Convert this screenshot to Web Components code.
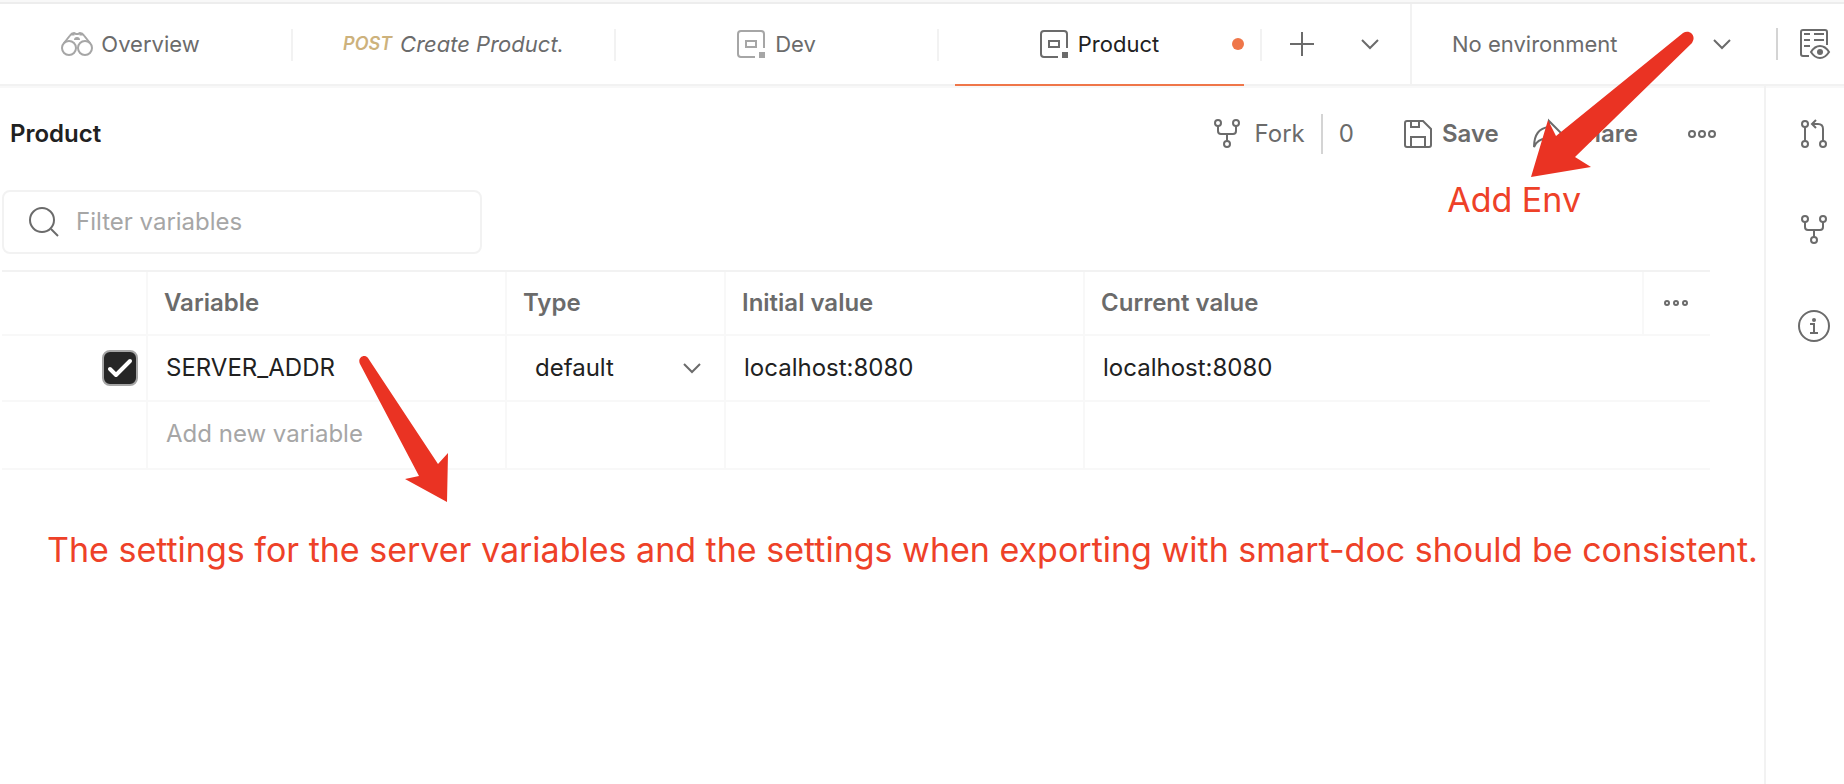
<!DOCTYPE html>
<html lang="en">
<head>
<meta charset="utf-8">
<meta name="viewport" content="width=device-width, initial-scale=1">
<title>Product environment</title>
<style>
  body { margin: 0; background: #fff; font-family: Inter, "Liberation Sans", sans-serif; font-size: 22px; line-height: 32px; color: #6b6b6b; }
</style>
</head>
<body>
<api-workspace></api-workspace>

<script>
const define = (name, html, setup) => {
  const template = document.createElement('template');
  template.innerHTML = html;
  customElements.define(name, class extends HTMLElement {
    constructor() {
      super();
      this.attachShadow({ mode: 'open' }).append(template.content.cloneNode(true));
    }
    connectedCallback() { if (setup) setup(this, this.shadowRoot); }
  });
};

const fork = '<circle cx="5" cy="4" r="3"/><circle cx="23" cy="4" r="3"/><circle cx="14" cy="25" r="3"/><path d="M5 7v5a3 3 0 0 0 3 3h12a3 3 0 0 0 3-3V7M14 15v7"/>';
const icons = {
  binoculars: [32, 24, '<circle cx="8" cy="16" r="7"/><circle cx="24" cy="16" r="7"/><path d="M3 11 9 3.500C10 2 11 1 13 1l2 1h2l2-1c2 0 3 1 4 2.500L29 11M10.500 2.500h3M18.500 2.500h3"/><path d="M13 8a3 3 0 0 1 6 0z" fill="currentColor" stroke="none"/>'],
  environment: [28, 28, '<path d="M18 27H4a3 3 0 0 1-3-3V4a3 3 0 0 1 3-3h20a3 3 0 0 1 3 3v14M9 11h10v6H9z"/><path d="M22 22h6v6h-6z" fill="currentColor" stroke="none"/>'],
  plus: [24, 24, '<path d="M12 0v24M0 12h24"/>'],
  chevron: [18, 10, '<path d="m1 1 8 8 8-8"/>'],
  preview: [30, 30, '<path d="M9 27H3a2 2 0 0 1-2-2V3a2 2 0 0 1 2-2h22a2 2 0 0 1 2 2v13M4 5h6M14 5h10M4 11h6M14 11h10M4 17h6"/><path d="M11 23c5-8 13-8 18 0-5 8-13 8-18 0z"/><circle cx="20" cy="23" r="3" fill="currentColor" stroke="none"/>'],
  fork: [28, 30, fork],
  save: [28, 28, '<path d="M3 1h16l8 8v16a2 2 0 0 1-2 2H3a2 2 0 0 1-2-2V3a2 2 0 0 1 2-2zM7 1v6h8V1M7 27V17h14v10"/>'],
  share: [30, 28, '<path d="M1 27C1 15 6 8 16 7V1l13 13-13 13v-8C9 18 4 20 1 27z"/>'],
  dots: [28, 8, '<circle cx="4" cy="4" r="3"/><circle cx="14" cy="4" r="3"/><circle cx="24" cy="4" r="3"/>'],
  smalldots: [24, 8, '<circle cx="3" cy="4" r="2"/><circle cx="12" cy="4" r="2"/><circle cx="21" cy="4" r="2"/>'],
  pull: [28, 30, '<circle cx="5" cy="4" r="3"/><circle cx="5" cy="24" r="3"/><circle cx="23" cy="24" r="3"/><path d="M5 7v14M23 21V9c0-3-2-5-5-5h-6M16 0l-4 4 4 4"/>'],
  info: [32, 32, '<circle cx="16" cy="16" r="15"/><path d="M12 14h4v9M12 23h8"/><circle cx="16" cy="10" r="2" fill="currentColor" stroke="none"/>'],
  search: [30, 30, '<circle cx="13" cy="13" r="12"/><path d="m22 22 7 7"/>'],
  check: [24, 18, '<path d="m2 10 6 6L22 2" stroke-width="4" stroke-linecap="round" stroke-linejoin="round"/>']
};

define('ui-icon', `
  <style>
    :host { display: inline-flex; flex: none; }
    svg { display: block; fill: none; stroke: currentColor; stroke-width: 2; overflow: visible; }
  </style>`, (host, root) => {
  const [w, h, shape] = icons[host.getAttribute('name')];
  root.querySelector('svg')?.remove();
  root.querySelector('style').insertAdjacentHTML('afterend', `<svg width="${w}" height="${h}" viewBox="0 0 ${w} ${h}" aria-hidden="true">${shape}</svg>`);
});

define('env-tab', `
  <style>
    :host { display: flex; flex: 1; align-items: center; min-width: 0; }
    a { flex: 1; position: relative; display: flex; align-items: center; justify-content: center; gap: 8px;
        margin: 0 16px; height: 80px; border-bottom: 2px solid transparent; color: inherit; text-decoration: none; white-space: nowrap; }
    i { flex: none; width: 2px; height: 32px; background: #f2f2f2; }
    :host([active]) a { border-color: #ef7649; }
    :host([active]) slot:not([name]) { color: #212121; }
    :host([preview]) a { font-style: italic; }
    :host([environment]) a { gap: 10px; }
    b { display: none; }
    :host([active]) b { display: block; position: absolute; right: 0; top: 34px; width: 12px; height: 12px; border-radius: 50%; background: #ef7649; }
    slot[name=icon] { color: #a6a6a6; }
    :host([active]) slot[name=icon] { color: #6b6b6b; }
  </style>
  <a href="#"><slot name="icon"></slot><slot></slot><b></b></a><i></i>`);

define('env-picker', `
  <style>
    :host { display: flex; align-items: center; flex: none; width: 432px; height: 80px; border-left: 2px solid #f2f2f2; }
    label { display: grid; flex: 1; align-items: center; margin: 0 45px 0 40px; }
    select, ui-icon { grid-area: 1 / 1; }
    select { appearance: none; border: 0; margin: 0; padding: 0; height: 40px; width: 100%; background: none; font: inherit; color: inherit; }
    ui-icon { justify-self: end; pointer-events: none; }
    i { width: 2px; height: 32px; background: #d4d4d4; }
    button { display: flex; margin: 0 14px 0 22px; border: 0; padding: 0; background: none; color: inherit; }
  </style>
  <label><select aria-label="Environment"><option>No environment</option></select><ui-icon name="chevron"></ui-icon></label>
  <i></i><button type="button" aria-label="Environment quick look"><ui-icon name="preview"></ui-icon></button>`);

define('top-bar', `
  <style>
    :host { display: flex; border-top: 2px solid #ededed; box-shadow: inset 0 -2px #f2f2f2; height: 82px; outline: 2px solid #f8f8f8; margin-top: 2px; }
    .strip { flex: 1; min-width: 0; overflow: hidden; }
    nav { display: flex; margin-left: -30px; height: 82px; }
    .add { flex: none; width: 148px; display: flex; align-items: center; height: 80px; padding: 0 31px 0 28px; box-sizing: border-box; justify-content: space-between; }
    button { display: flex; border: 0; padding: 0; background: none; color: inherit; }
    .post { font-size: 18px; font-weight: 600; color: #cdb27c; }
  </style>
  <div class="strip"><nav>
    <env-tab><ui-icon slot="icon" name="binoculars"></ui-icon>Overview</env-tab>
    <env-tab preview><span slot="icon" class="post">POST</span>Create Product.</env-tab>
    <env-tab environment><ui-icon slot="icon" name="environment"></ui-icon>Dev</env-tab>
    <env-tab environment active><ui-icon slot="icon" name="environment"></ui-icon>Product</env-tab>
  </nav></div>
  <div class="add">
    <button type="button" aria-label="New tab"><ui-icon name="plus"></ui-icon></button>
    <button type="button" aria-label="Tab list"><ui-icon name="chevron"></ui-icon></button>
  </div>
  <env-picker></env-picker>`);

define('page-header', `
  <style>
    :host { display: flex; align-items: center; justify-content: space-between; height: 96px; padding: 0 48px 0 10px; }
    h1 { margin: 0; font-size: 24px; line-height: 32px; font-weight: 600; color: #212121; }
    div { display: flex; align-items: center; }
    button { display: flex; align-items: center; gap: 10px; border: 0; padding: 0; background: none; font: inherit; font-size: 24px; color: inherit; }
    .fork { gap: 14px; }
    .fork i { width: 2px; height: 40px; background: #d4d4d4; margin: 0 2px; }
    .save { font-weight: 600; margin-left: 50px; }
    .share { font-weight: 600; margin-left: 34px; gap: 8px; }
    .more { margin-left: 50px; }
  </style>
  <h1>Product</h1>
  <div>
    <button type="button" class="fork"><ui-icon name="fork"></ui-icon><span>Fork</span><i></i><span>0</span></button>
    <button type="button" class="save"><ui-icon name="save"></ui-icon>Save</button>
    <button type="button" class="share"><ui-icon name="share"></ui-icon>Share</button>
    <button type="button" class="more" aria-label="More actions"><ui-icon name="dots"></ui-icon></button>
  </div>`);

define('filter-box', `
  <style>
    :host { display: block; margin: 8px 0 16px 2px; }
    label { display: flex; align-items: center; gap: 17px; box-sizing: border-box; width: 480px; max-width: 100%; height: 64px; padding: 0 25px; border: 2px solid #f2f2f2; border-radius: 8px; }
    input { flex: 1; min-width: 0; border: 0; padding: 0; outline: 0; background: none; font: inherit; font-size: 24px; color: #212121; }
    input::placeholder { color: #a6a6a6; opacity: 1; }
  </style>
  <label><ui-icon name="search"></ui-icon><input type="text" placeholder="Filter variables" aria-label="Filter variables"></label>`);

define('variables-table', `
  <style>
    :host { display: block; margin: 0 54px 0 2px; font-size: 24px; }
    table { width: 100%; table-layout: fixed; border-collapse: separate; border-spacing: 0; border-top: 2px solid #f2f2f2; }
    th, td { box-sizing: border-box; padding: 0 16px; text-align: left; border-bottom: 2px solid #f8f8f8; border-right: 2px solid #f8f8f8; }
    th { height: 64px; font-weight: 600; }
    td { height: 66px; color: #212121; }
    tr:last-child td { height: 68px; padding-bottom: 2px; }
    th:last-child, td:last-child { border-right: 0; }
    th:last-child { padding: 0 20px; }
    .pick { width: 146px; } .name { width: 359px; } .type { width: 219px; } .menu { width: 66px; }
    input[type=text] { display: block; width: 100%; box-sizing: border-box; border: 0; padding: 0 2px; outline: 0; background: none; font: inherit; color: inherit; }
    input::placeholder { color: #a6a6a6; opacity: 1; }
    .tick { display: grid; place-items: center; width: 36px; margin-left: auto; }
    .tick *, .kind * { grid-area: 1 / 1; }
    .tick input { appearance: none; box-sizing: border-box; margin: 0; width: 36px; height: 36px; border: 2px solid #a6a6a6; border-radius: 8px; background: #262626; }
    .tick ui-icon { color: #fff; pointer-events: none; }
    td:first-child { padding: 0 8px 0 0; }
    .kind { display: grid; align-items: center; padding: 0 7px 0 12px; }
    .kind select { appearance: none; width: 100%; border: 0; margin: 0; padding: 0; background: none; font: inherit; color: inherit; }
    .kind ui-icon { justify-self: end; pointer-events: none; color: #6b6b6b; }
    button { display: flex; border: 0; padding: 0; background: none; color: inherit; }
  </style>
  <table>
    <colgroup><col class="pick"><col class="name"><col class="type"><col class="name"><col><col class="menu"></colgroup>
    <thead><tr><th></th><th>Variable</th><th>Type</th><th>Initial value</th><th>Current value</th>
      <th><button type="button" aria-label="Table options"><ui-icon name="smalldots"></ui-icon></button></th></tr></thead>
    <tbody>
      <tr>
        <td><label class="tick"><input type="checkbox" checked aria-label="Enable SERVER_ADDR"><ui-icon name="check"></ui-icon></label></td>
        <td><input type="text" value="SERVER_ADDR" aria-label="Variable"></td>
        <td><label class="kind"><select aria-label="Type"><option>default</option></select><ui-icon name="chevron"></ui-icon></label></td>
        <td><input type="text" value="localhost:8080" aria-label="Initial value"></td>
        <td colspan="2"><input type="text" value="localhost:8080" aria-label="Current value"></td>
      </tr>
      <tr>
        <td></td><td><input type="text" placeholder="Add new variable" aria-label="New variable"></td><td></td><td></td><td colspan="2"></td>
      </tr>
    </tbody>
  </table>`);

define('side-rail', `
  <style>
    :host { display: flex; flex-direction: column; align-items: center; gap: 65px; width: 78px; flex: none; box-sizing: content-box; border-left: 2px solid #f2f2f2; padding-top: 34px; }
    nav { display: contents; }
    button { display: flex; border: 0; margin-left: 18px; padding: 0; background: none; color: inherit; }
  </style>
  <nav aria-label="Context">
    <button type="button" aria-label="Pull requests"><ui-icon name="pull"></ui-icon></button>
    <button type="button" aria-label="Forks"><ui-icon name="fork"></ui-icon></button>
    <button type="button" aria-label="Details"><ui-icon name="info"></ui-icon></button>
  </nav>`);

define('guide-notes', `
  <style>
    :host { position: absolute; inset: 0; pointer-events: none; color: #ee4128; font-size: 34px; line-height: 44px; }
    svg { position: absolute; fill: #ea3323; }
    .env { top: 30px; right: 146px; }
    .server { top: 354px; left: 356px; }
    span { position: absolute; top: 178px; right: 263px; white-space: nowrap; }
  </style>
  <svg class="env" width="168" height="150" viewBox="0 0 168 150" aria-hidden="true"><path d="M1 147 18 90l8 16L153 3c6-4 14 2 9 10L45 127l16 10z"/></svg>
  <svg class="server" width="94" height="150" viewBox="0 0 94 150" aria-hidden="true"><path d="M91 148 49 125l14-3L4 10C1 4 8-1 12 4l70 106 10-11z"/></svg>
  <span>Add Env</span>`);

define('api-workspace', `
  <style>
    :host { display: flex; flex-direction: column; position: relative; min-height: 100vh; overflow: hidden; }
    .body { display: flex; flex: 1; }
    main { flex: 1; min-width: 0; }
    p { margin: 58px 0 0 47px; font-size: 34px; line-height: 44px; color: #ee4128; white-space: nowrap; }
  </style>
  <top-bar></top-bar>
  <div class="body">
    <main>
      <page-header></page-header>
      <filter-box></filter-box>
      <variables-table></variables-table>
      <p>The settings for the server variables and the settings when exporting with smart-doc should be consistent.</p>
    </main>
    <side-rail></side-rail>
  </div>
  <guide-notes></guide-notes>`);
</script>
</body>
</html>
